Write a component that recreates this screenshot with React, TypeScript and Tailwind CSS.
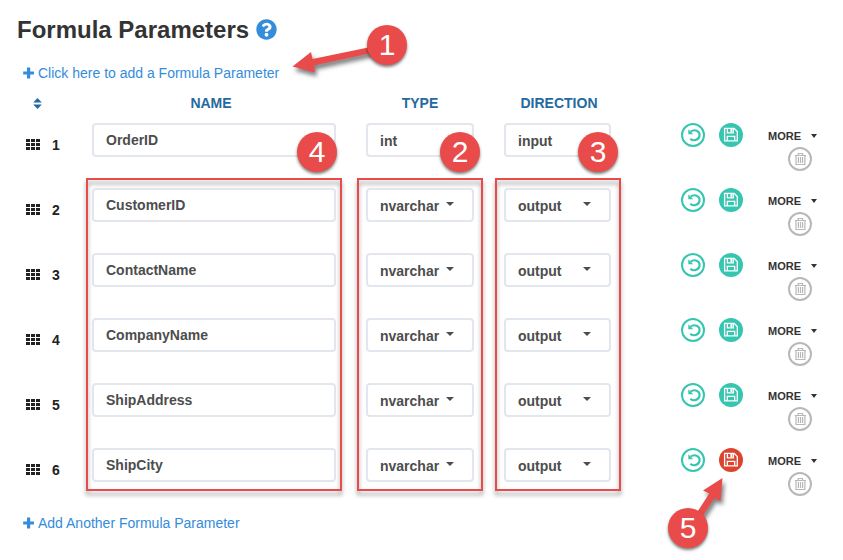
import React from "react";
import { FaQuestionCircle } from "react-icons/fa";

type Row = { name: string; type: string; direction: string; dirty?: boolean };

const rows: Row[] = [
  { name: "OrderID", type: "int", direction: "input" },
  { name: "CustomerID", type: "nvarchar", direction: "output" },
  { name: "ContactName", type: "nvarchar", direction: "output" },
  { name: "CompanyName", type: "nvarchar", direction: "output" },
  { name: "ShipAddress", type: "nvarchar", direction: "output" },
  { name: "ShipCity", type: "nvarchar", direction: "output", dirty: true },
];

function GripIcon() {
  return (
    <svg width="14" height="11" viewBox="0 0 14 11" fill="#222">
      {[0, 4, 8].map((y) =>
        [0, 5, 10].map((x) => <rect key={`${x}-${y}`} x={x} y={y} width="4" height="3" />)
      )}
    </svg>
  );
}

function PlusIcon() {
  return (
    <svg width="12" height="12" viewBox="0 0 12 12" fill="currentColor">
      <path d="M4 0.5 H7.2 V4.4 H11 V7.6 H7.2 V11.5 H4 V7.6 H0.2 V4.4 H4 Z" />
    </svg>
  );
}

function SortIcon() {
  return (
    <svg width="9" height="11" viewBox="0 0 9 11" fill="currentColor">
      <path d="M4.5 0 L8.8 4.5 H0.2 Z M0.2 6.5 H8.8 L4.5 11 Z" />
    </svg>
  );
}

function UndoIcon() {
  return (
    <svg width="24" height="24" viewBox="0 0 24 24" fill="none">
      <circle cx="12" cy="12" r="11" stroke="#36c6b0" strokeWidth="2" />
      <path d="M9.6 8.7 C13.8 5.6 18.6 8.1 18.6 12 C18.6 16.8 12.8 18.9 9.3 15.7" stroke="#36c6b0" strokeWidth="2.1" />
      <path d="M7.3 6.2 V11.2 H12.2 Z" fill="#36c6b0" />
    </svg>
  );
}

function SaveIcon({ dirty }: { dirty?: boolean }) {
  return (
    <svg width="24" height="24" viewBox="0 0 24 24" fill="none">
      <circle cx="12" cy="12" r="12" fill={dirty ? "#dc4430" : "#36c6b0"} />
      <g stroke="#fff" strokeWidth="1.3">
        <path d="M5.6 5.4 H15.2 L18.3 8.5 V17.9 H5.6 Z" />
        <path d="M8.4 5.2 V9.8 H14.4 V5.2" />
        <path d="M8.3 17.8 V13.4 H15.7 V17.8" />
      </g>
      <rect x="11.4" y="5" width="2" height="4" fill="#fff" />
    </svg>
  );
}

function TrashIcon() {
  return (
    <svg width="24" height="24" viewBox="0 0 24 24" fill="none" stroke="#b8b8b8">
      <circle cx="12" cy="12" r="11" strokeWidth="2" />
      <path d="M8 8.5 V17.5 H16.9 V8.5 M6.8 8.5 H18 M10.2 8 V6.5 H14.6 V8" strokeWidth="1.2" />
      <path d="M10.4 10 V16 M12.5 10 V16 M14.6 10 V16" strokeWidth="1.2" />
    </svg>
  );
}

function Caret({ className }: { className: string }) {
  return (
    <svg className={className} viewBox="0 0 8 4" fill="currentColor" preserveAspectRatio="none">
      <path d="M0 0 H8 L4 4 Z" />
    </svg>
  );
}

const field =
  "flex h-[34px] items-center rounded-[4px] border-2 border-[#e1e7ec] bg-white text-sm font-bold text-[#4d4d4d]";

function ParameterRow({ row, index }: { row: Row; index: number }) {
  return (
    <div className="flex h-[65px] items-start">
      <div className="flex w-[66px] items-start gap-3 text-sm font-bold text-[#222]">
        <div className="pt-4">
          <GripIcon />
        </div>
        <span className="pt-3">{index + 1}</span>
      </div>
      <div className={`${field} w-[244px] pl-3`}>{row.name}</div>
      <div className={`${field} ml-[30px] w-[108px] justify-between pl-3 pr-[18px] pt-0.5`}>
        {row.type}
        {index > 0 && <Caret className="mb-1 h-1 w-2" />}
      </div>
      <div className={`${field} ml-[30px] w-[107px] justify-between pl-3 pr-[18px] pt-0.5`}>
        {row.direction}
        {index > 0 && <Caret className="mb-1 h-1 w-2" />}
      </div>
      <div className="ml-[70px] flex gap-3.5">
        <UndoIcon />
        <SaveIcon dirty={row.dirty} />
      </div>
      <div className="ml-[25px] flex flex-col">
        <div className="flex h-6 items-center gap-2.5 pt-0.5 text-[11px] font-bold leading-none text-[#333]">
          MORE
          <Caret className="h-[4px] w-[6px]" />
        </div>
        <div className="ml-5">
          <TrashIcon />
        </div>
      </div>
    </div>
  );
}

function AddLink({ children }: { children: React.ReactNode }) {
  return (
    <div className="flex h-5 items-center gap-[3px] pl-[23px] text-sm text-[#348cdb]">
      <PlusIcon />
      <span>{children}</span>
    </div>
  );
}

const highlights = [
  "left-[86px] w-[256px]",
  "left-[357px] w-[126px]",
  "left-[495px] w-[126px]",
];

const badges = [
  { n: 1, place: "left-[367px] top-[25px]" },
  { n: 4, place: "left-[297px] top-[132px]" },
  { n: 2, place: "left-[440px] top-[132px]" },
  { n: 3, place: "left-[578px] top-[132px]" },
  { n: 5, place: "left-[668px] top-[508px]" },
];

function Annotations() {
  return (
    <div className="pointer-events-none absolute inset-0">
      {highlights.map((place) => (
        <div
          key={place}
          className={`absolute top-[178px] h-[313px] border-2 border-[#e94b4b] drop-shadow-[0_4px_2px_rgba(0,0,0,0.4)] ${place}`}
        />
      ))}
      <svg
        className="absolute inset-0 drop-shadow-[2px_4px_2px_rgba(0,0,0,0.5)]"
        width="843"
        height="560"
        viewBox="0 0 843 560"
        fill="#e94b4b"
      >
        <path d="M292.5 66.5 L311 52 L312.5 59 L373 46.5 L374 52.5 L314 65.5 L315 72.5 Z" />
        <path d="M722.5 478 L703 490.5 L709.3 493.5 L694 517 L700 520 L714.5 498 L720.5 501 Z" />
      </svg>
      {badges.map(({ n, place }) => (
        <div
          key={n}
          className={`absolute flex size-10 items-center justify-center rounded-full bg-[#e94b4b] text-[30px] leading-none text-white shadow-[0_2px_3px_rgba(0,0,0,0.5)] ${place}`}
        >
          {n}
        </div>
      ))}
    </div>
  );
}

export default function App() {
  return (
    <div className="relative h-[560px] w-[843px] overflow-hidden bg-white font-['Liberation_Sans',Arial,sans-serif]">
      <div className="flex h-[63px] items-center gap-[7px] pb-1 pl-[17px]">
        <h1 className="text-2xl font-bold text-[#333]">Formula Parameters</h1>
        <FaQuestionCircle size={21} color="#348cdb" />
      </div>
      <AddLink>Click here to add a Formula Parameter</AddLink>
      <div className="flex h-10 items-center text-center text-sm font-bold text-[#256a9e]">
        <div className="flex w-[74px] justify-center">
          <SortIcon />
        </div>
        <div className="ml-[15px] w-[244px]">NAME</div>
        <div className="ml-[33px] w-[108px]">TYPE</div>
        <div className="ml-[31px] w-[108px]">DIRECTION</div>
      </div>
      <div className="pl-[26px]">
        {rows.map((row, i) => (
          <ParameterRow key={row.name} row={row} index={i} />
        ))}
      </div>
      <AddLink>Add Another Formula Parameter</AddLink>
      <Annotations />
    </div>
  );
}
